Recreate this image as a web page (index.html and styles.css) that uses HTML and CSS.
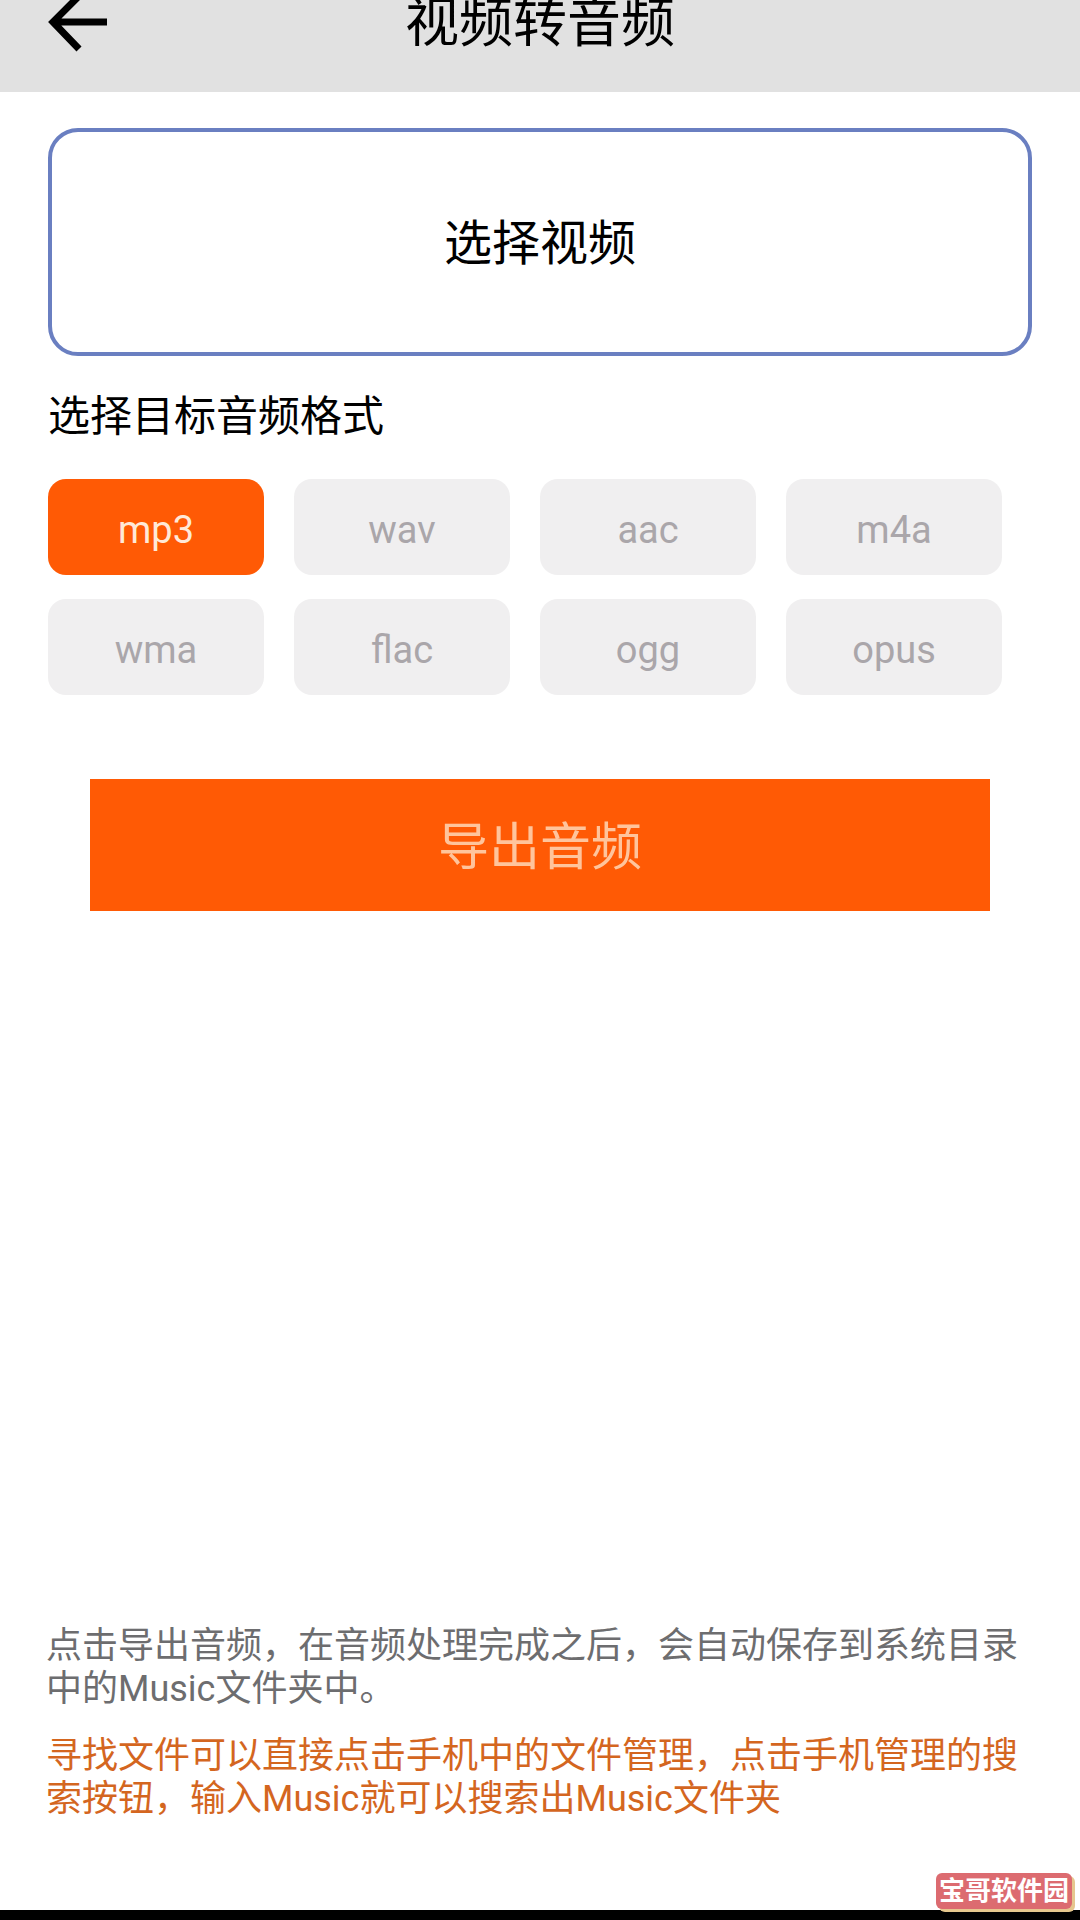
FILE: index.html
```html
<!DOCTYPE html>
<html lang="zh-CN">
<head>
    <meta charset="UTF-8">
    <meta name="viewport" content="width=device-width, initial-scale=1.0">
    <title>视频转音频</title>
    <link rel="stylesheet" href="styles.css">
</head>
<body>
    <div class="page">
        <header class="top-bar">
            <div class="top-row">
                <svg class="back-icon" viewBox="0 0 64 64" width="64" height="64" aria-hidden="true">
                    <path d="M59 32H5M33 4 5 32l26 27" fill="none" stroke="#000" stroke-width="7"/>
                </svg>
                <h1 class="page-title">视频转音频</h1>
            </div>
        </header>

        <main class="content">
            <div class="pick-box">选择视频</div>
            <p class="format-label">选择目标音频格式</p>
            <div class="format-grid">
                <div class="chip chip-active">mp3</div>
                <div class="chip">wav</div>
                <div class="chip">aac</div>
                <div class="chip">m4a</div>
                <div class="chip">wma</div>
                <div class="chip">flac</div>
                <div class="chip">ogg</div>
                <div class="chip">opus</div>
            </div>
            <div class="export-btn">导出音频</div>
        </main>

        <section class="notes">
            <p class="note">点击导出音频，在音频处理完成之后，会自动保存到系统目录中的Music文件夹中。</p>
            <p class="note note-warn">寻找文件可以直接点击手机中的文件管理，点击手机管理的搜索按钮，输入Music就可以搜索出Music文件夹</p>
        </section>

        <div class="bottom-strip"></div>
        <div class="watermark">宝哥软件园</div>
    </div>
</body>
</html>
```

FILE: styles.css
```css
* {
    box-sizing: border-box;
}
body {
    margin: 0;
    background-color: #fff;
    font-family: Roboto, "Noto Sans CJK SC", sans-serif;
}
.page {
    position: relative;
    display: flex;
    flex-direction: column;
    width: 1080px;
    height: 1920px;
    overflow: hidden;
}
.top-bar {
    height: 92px;
    flex-shrink: 0;
    background-color: #e1e1e1;
    padding: 0 48px;
}
.top-row {
    display: grid;
    grid-template-columns: 1fr auto 1fr;
    align-items: center;
    height: 64px;
    margin-top: -12px;
}
.back-icon {
    display: block;
}
.page-title {
    margin: 4px 0 0;
    font-size: 54px;
    font-weight: 400;
    line-height: 64px;
    color: #000;
}
.content {
    padding: 36px 48px 0;
}
.pick-box {
    display: flex;
    justify-content: center;
    align-items: center;
    height: 228px;
    padding-bottom: 7px;
    border: 4px solid #6a7fc1;
    border-radius: 30px;
    font-size: 48px;
    color: #000;
}
.format-label {
    margin: 37px 0 0;
    font-size: 42px;
    line-height: 48px;
    color: #000;
}
.format-grid {
    display: grid;
    grid-template-columns: repeat(4, 216px);
    column-gap: 30px;
    row-gap: 24px;
    margin-top: 38px;
}
.chip {
    display: flex;
    justify-content: center;
    align-items: center;
    height: 96px;
    padding-top: 5px;
    border-radius: 18px;
    background-color: #f0eff0;
    font-size: 38px;
    color: #aaa6aa;
}
.chip-active {
    background-color: #ff5a05;
    color: #ffe9d8;
}
.export-btn {
    display: flex;
    justify-content: center;
    align-items: center;
    height: 132px;
    margin: 84px 42px 0;
    padding-bottom: 4px;
    background-color: #ff5a05;
    font-size: 51px;
    color: #ffc49c;
}
.notes {
    margin-top: auto;
    padding: 0 48px 89px 46px;
}
.note {
    margin: 0;
    font-size: 36px;
    line-height: 43px;
    color: #6d6d6f;
}
.note-warn {
    margin-top: 24px;
    color: #d4661f;
}
.bottom-strip {
    height: 10px;
    flex-shrink: 0;
    background-color: #000;
}
/* 右下角水印 */
.watermark {
    position: absolute;
    right: 8px;
    bottom: 11px;
    width: 136px;
    height: 36px;
    border-radius: 6px;
    background-color: #dc6b70;
    box-shadow: 3px 3px 0 #e6c78e;
    text-align: center;
    font-size: 26px;
    font-weight: 700;
    line-height: 36px;
    color: #fff;
}
```
